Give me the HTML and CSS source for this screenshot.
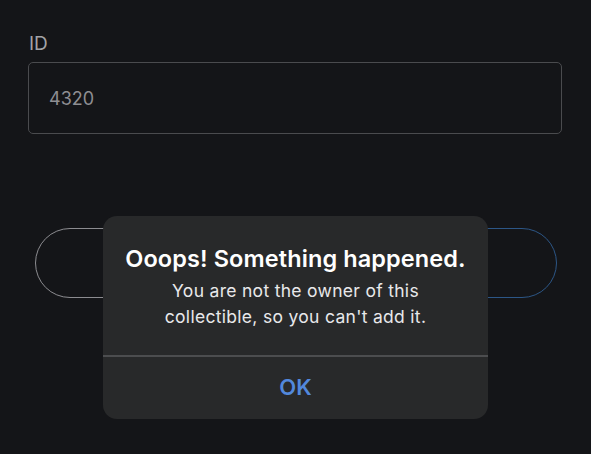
FILE: index.html
```html
<!DOCTYPE html>
<html lang="en">

<head>
  <meta charset="UTF-8">
  <meta name="viewport" content="width=device-width, initial-scale=1.0">
  <title>Add collectible</title>
  <link rel="stylesheet" href="styles.css">
</head>

<body>
  <div class="page">
    <div class="field">
      <div class="label">ID</div>
      <div class="input">4320</div>
    </div>
    <div class="actions">
      <div class="btn btn_cancel"></div>
      <div class="btn btn_add"></div>
    </div>
  </div>

  <!-- alert -->
  <div class="alert">
    <div class="alert_body">
      <div class="alert_title">Ooops! Something happened.</div>
      <div class="alert_text">You are not the owner of this<br>collectible, so you can't add it.</div>
    </div>
    <div class="alert_btn">OK</div>
  </div>
</body>

</html>
```

FILE: styles.css
```css
body {
  margin: 0;
  width: 591px;
  height: 454px;
  overflow: hidden;
  background: #141518;
  font-family: Inter, 'Liberation Sans', sans-serif;
  position: relative;
}

.page {
  padding: 33px 29px 0 28px;
}

/* 輸入框 */
.label {
  color: #a3a3a6;
  font-size: 19px;
  line-height: 22px;
  padding-left: 1px;
}

.input {
  margin-top: 7px;
  height: 70px;
  border: 1px solid #4a4b4e;
  border-radius: 5px;
  color: #8e8e92;
  font-size: 18px;
  line-height: 72px;
  padding-left: 20px;
}

/* 按鈕 */
.actions {
  display: flex;
  gap: 22px;
  margin-top: 94px;
  padding: 0 5px 0 7px;
}

.btn {
  flex: 1;
  height: 68px;
  border-radius: 36px;
  border: 1px solid #8c8c90;
}

.btn_add {
  border: 1px solid #2c5686;
}

/* 彈窗 */
.alert {
  position: absolute;
  left: 103px;
  top: 216px;
  width: 385px;
  height: 203px;
  background: #28292a;
  border-radius: 14px;
  display: flex;
  flex-direction: column;
  text-align: center;
}

.alert_body {
  height: 141px;
  box-sizing: border-box;
  padding-top: 28px;
  border-bottom: 2px solid #4c4d4f;
}

.alert_title {
  color: #fff;
  font-size: 23.5px;
  font-weight: 600;
  line-height: 30px;
  letter-spacing: 0.1px;
}

.alert_text {
  color: #e8e8ea;
  font-size: 17.5px;
  line-height: 26px;
  letter-spacing: 0.3px;
  margin-top: 4px;
}

.alert_btn {
  flex: 1;
  display: flex;
  align-items: center;
  justify-content: center;
  color: #5288dc;
  font-size: 22px;
  font-weight: 600;
  padding-bottom: 2px;
}
```
